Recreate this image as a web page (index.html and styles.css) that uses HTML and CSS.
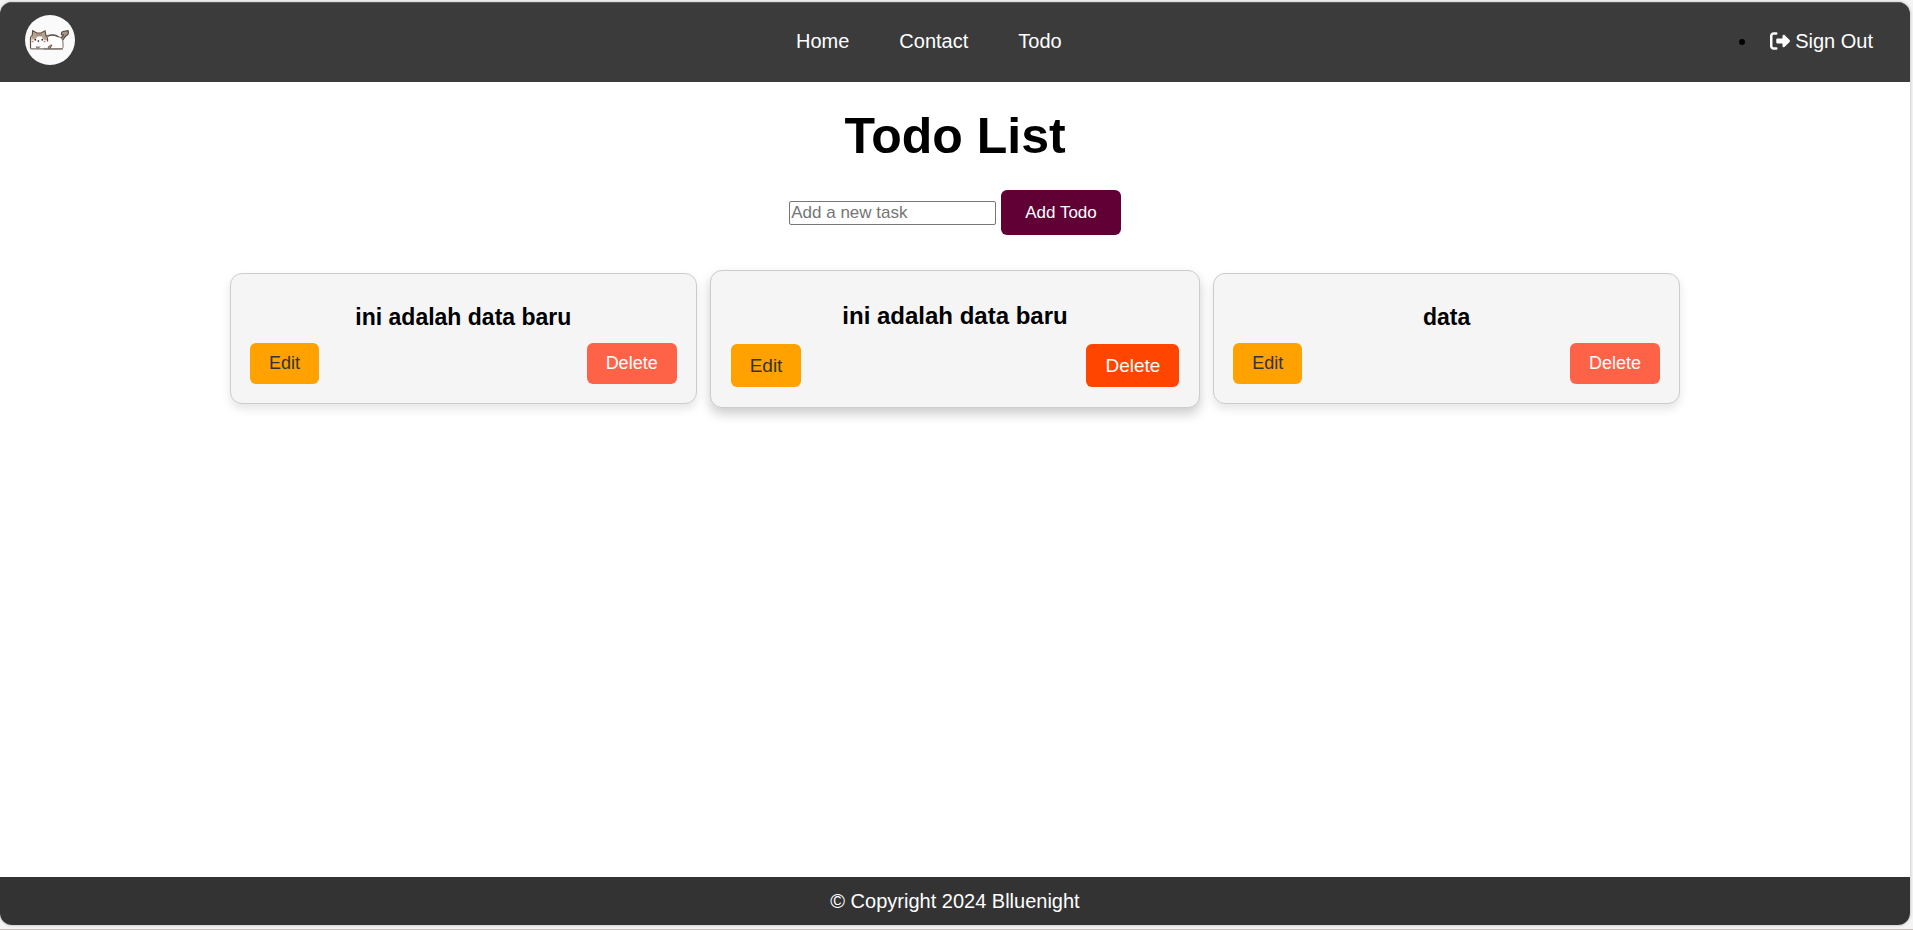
FILE: index.html
```html
<!DOCTYPE html>
<html lang="en">
<head>
  <meta charset="utf-8">
  <title>Todo List</title>
  <link rel="stylesheet" href="styles.css">
</head>
<body>
  <div class="window">
    <header class="header">
      <a class="logo" href="#" aria-label="Home page">
        <svg viewBox="0 0 50 50" width="50" height="50" aria-hidden="true">
          <circle cx="25" cy="25" r="25" fill="#fafafa"/>
          <path d="M36 24.500c-1-2.500 2.500-3 2.500-4.500-3 .5-2.500-3-.5-3.500l5-.9c1.200 2.400 0 4.400-1.800 5-2 1-1.700 3.400-3.700 4.400z" fill="#ab9584" stroke="#51483f" stroke-width="1.200"/>
          <path d="M19 22c3-2.500 10-2.500 13.500-.5 3.500.5 5.500 2.500 5.500 5.500v5.500l-1.300 1.500H19z" fill="#fff" stroke="#776b60"/>
          <path d="M5.500 33.500V22.500l1.800-2.500.4-4.200 4.200 2.200h4l4.200-2.200.9 5.200 1.800 4.500-1 4-3 4z" fill="#fff"/>
          <path d="M6.200 24.500l1.100-4.500.4-4.200 4.200 2.200h4l4.200-2.200.9 5.200 1.500 4.200c-3 .6-5-1-5.900-3.700h-4c-1 2-3 3.400-6.400 3z" fill="#b9a491"/>
          <path d="M5.500 33.500V22.500l1.800-2.500.4-4.200 4.200 2.200h4l4.200-2.200.9 5.200c2 1 1.800 3 1.500 5.500" fill="none" stroke="#5c5147" stroke-width="1.200"/>
          <path d="M22.500 21.500c3-2 8-2 11 .5" fill="none" stroke="#655548" stroke-width="1.400"/>
          <path d="M12 18.500v2.500M14 18.500v2.500M16 18.500v2.500" stroke="#8a715e" stroke-width=".8"/>
          <path d="M9.500 24.800h1.600M16.500 24.800H18M12.700 26h1.400" stroke="#221b19" stroke-width="1.400"/>
          <path d="M6.500 26.500h2.200M18.500 26.500h2" stroke="#e08080" stroke-width="1.600"/>
          <path d="M10.800 31.500l2.200 2 2-2M23 33.500c0-2 2-3.500 4-3.500l-2 3.500z" fill="#a68a72" stroke="#75604f"/>
          <path d="M5.500 33.800H38" stroke="#77736a" stroke-width="1.300"/>
        </svg>
      </a>
      <nav class="nav" aria-label="Main">
        <a href="#">Home</a>
        <a href="#">Contact</a>
        <a href="#">Todo</a>
      </nav>
      <ul class="account">
        <li>
          <a href="#"><svg class="icon" viewBox="0 0 512 512" aria-hidden="true"><path fill="currentColor" d="M377.900 105.900L500.700 228.700c7.200 7.200 11.300 17.100 11.300 27.300s-4.100 20.100-11.300 27.300L377.900 406.100c-6.400 6.400-15 9.900-24 9.900c-18.700 0-33.900-15.200-33.900-33.900l0-62.100-128 0c-17.700 0-32-14.300-32-32l0-64c0-17.700 14.300-32 32-32l128 0 0-62.100c0-18.700 15.200-33.900 33.900-33.900c9 0 17.600 3.600 24 9.900zM160 96L96 96c-17.700 0-32 14.300-32 32l0 256c0 17.700 14.300 32 32 32l64 0c17.700 0 32 14.300 32 32s-14.300 32-32 32l-64 0c-53 0-96-43-96-96L0 128C0 75 43 32 96 32l64 0c17.700 0 32 14.300 32 32s-14.300 32-32 32z"/></svg> Sign Out</a>
        </li>
      </ul>
    </header>

    <main class="main">
      <h1>Todo List</h1>
      <form class="form">
        <input type="text" placeholder="Add a new task" aria-label="New task">
        <button type="button">Add Todo</button>
      </form>
      <div class="cards">
        <article class="card">
          <h3>ini adalah data baru</h3>
          <div class="actions">
            <button type="button" class="edit">Edit</button>
            <button type="button" class="delete">Delete</button>
          </div>
        </article>
        <article class="card card-active">
          <h3>ini adalah data baru</h3>
          <div class="actions">
            <button type="button" class="edit">Edit</button>
            <button type="button" class="delete">Delete</button>
          </div>
        </article>
        <article class="card">
          <h3>data</h3>
          <div class="actions">
            <button type="button" class="edit">Edit</button>
            <button type="button" class="delete">Delete</button>
          </div>
        </article>
      </div>
    </main>

    <footer class="footer">© Copyright 2024 Blluenight</footer>
  </div>
</body>
</html>
```

FILE: styles.css
```css
* {
  box-sizing: border-box;
}

body {
  display: flex;
  min-height: 100vh;
  margin: 0;
  padding: 2px 3px 4px 0;
  border-bottom: 1px solid #c9bdb9;
  background: #f4f4f5;
  font: 20px/24px "Liberation Sans", Arial, sans-serif;
  color: #000;
}

.window {
  display: flex;
  flex: 1;
  flex-direction: column;
  overflow: hidden;
  border-radius: 12px;
  background: #fff;
  box-shadow: 0 0 3px rgba(0, 0, 0, 0.3);
}

.header {
  display: flex;
  align-items: flex-start;
  justify-content: space-between;
  height: 80px;
  padding: 12px 25px 0;
  border-top: 1px solid #5c5c5c;
  background: #3b3b3b;
}

.logo,
.logo svg {
  display: block;
}

.nav {
  display: flex;
  gap: 50px;
  padding: 14px 25px 0 50px;
}

.nav a,
.account a {
  color: #fff;
  text-decoration: none;
}

.account {
  margin: 0;
  padding: 14px 0 0;
}

.account li {
  padding: 0 12px;
}

.icon {
  width: 20px;
  height: 20px;
  vertical-align: -3px;
}

.main {
  flex: 1;
  width: 80%;
  max-width: 1450px;
  margin: 0 auto;
  text-align: center;
}

h1 {
  margin: 25px 0 24px;
  font-size: 50px;
  line-height: 59px;
}

.form {
  display: flex;
  align-items: center;
  justify-content: center;
  gap: 5px;
}

.form input {
  width: 207px;
  height: 24px;
  padding: 1px;
  border: 1px solid #767676;
  border-radius: 2px;
  font: 17px/20px "Liberation Sans", Arial, sans-serif;
}

.form input::placeholder {
  color: #757575;
}

button {
  border: 0;
  border-radius: 6px;
  font-family: inherit;
}

.form button {
  height: 45px;
  padding: 0 24px;
  background: #600035;
  color: #fff;
  font-size: 17px;
}

.cards {
  display: grid;
  grid-template-columns: repeat(3, 1fr);
  gap: 25px;
  margin-top: 38px;
}

.card {
  padding: 30px 19px 19px;
  border: 1px solid #ccc;
  border-radius: 12px;
  background: #f5f5f5;
  box-shadow: 0 5px 10px rgba(0, 0, 0, 0.1);
}

.card h3 {
  margin: 0 0 12px;
  font-size: 23px;
  line-height: 27px;
}

.actions {
  display: flex;
  justify-content: space-between;
}

.actions button {
  padding: 10px 19px;
  font-size: 18px;
  line-height: 21px;
}

.edit {
  background: #ffa200;
  color: #333;
}

.delete {
  background: #ff6347;
  color: #fff;
}

.card-active {
  margin: -3px -12px -4px;
  padding: 31px 20px 20px;
  box-shadow: 0 6px 12px rgba(0, 0, 0, 0.2);
}

.card-active h3 {
  margin-bottom: 15px;
  font-size: 24px;
}

.card-active .actions button {
  padding: 11px 19px;
  font-size: 19px;
}

.card-active .delete {
  background: #ff4500;
}

.footer {
  padding: 12px;
  background: #333;
  color: #fff;
  text-align: center;
}
```
